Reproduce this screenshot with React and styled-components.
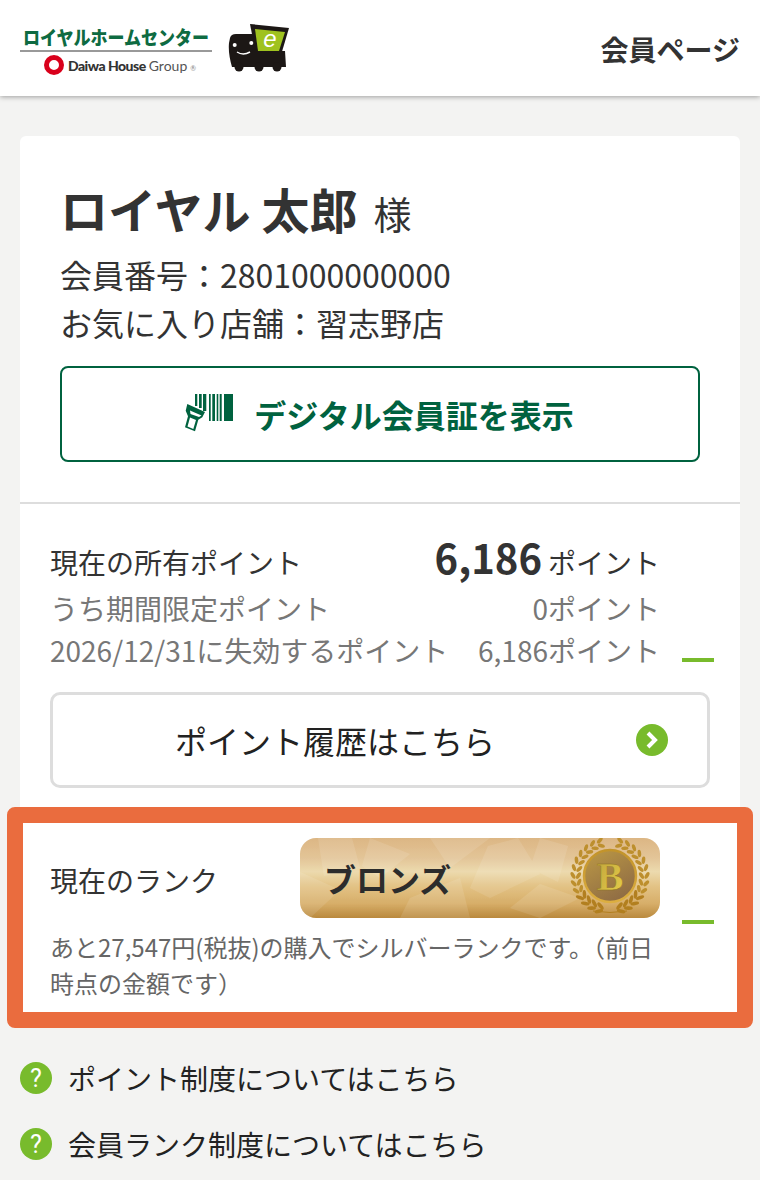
import React from "react";
import styled, { createGlobalStyle } from "styled-components";

const Global = createGlobalStyle`
  html, body { margin: 0; padding: 0; background: #f3f3f2; }
  body { font-family: "Noto Sans CJK JP", "Noto Sans", sans-serif; color: #333; }
  * { box-sizing: border-box; }
`;
const Page = styled.div`width: 760px; height: 1180px; overflow: hidden; background: #f3f3f2;`;
const Header = styled.header`
  height: 96px; background: #fff; box-shadow: 0 1px 5px rgba(0,0,0,.35);
  display: flex; align-items: center; justify-content: space-between; padding: 0 20px;
`;
const Brand = styled.div`display: flex; align-items: center; gap: 16px;`;
const Logo = styled.div`width: 192px; margin-top: 4px; display: flex; flex-direction: column; align-items: center;`;
const LogoName = styled.div`
  width: 100%; height: 29px; border-bottom: 2px solid #999; color: #0e6b42; text-align: center; white-space: nowrap;
  font-size: 17px; line-height: 27px; font-weight: 900; letter-spacing: 0;
`;
const LogoNameText = styled.span`display: inline-block; transform: scaleY(1.15);`;
const LogoGroup = styled.div`display: flex; align-items: center; gap: 4px; height: 24px; margin-top: 1px; padding-left: 8px; color: #333; font-family: Lato, sans-serif; font-size: 14px; white-space: nowrap;`;
const Ring = styled.span`width: 20px; height: 20px; border-radius: 50%; border: 5px solid #d9001b; background: #fff;`;
const LogoBold = styled.b`font-weight: 900; letter-spacing: -.5px;`;
const LogoThin = styled.span`color: #555; margin-left: -1px;`;
const LogoMark = styled.span`font-size: 7px; color: #888; margin: 5px 0 0 -1px;`;
const HeaderTitle = styled.div`font-size: 28px; line-height: 40px; font-weight: 700; color: #333; margin-top: 2px;`;

const Card = styled.section`margin: 40px 20px 0; background: #fff; border-radius: 6px 6px 0 0;`;
const Member = styled.div`padding: 36px 40px 40px; border-bottom: 2px solid #ddd;`;
const Name = styled.div`margin-bottom: 1px; font-size: 48px; line-height: 72px; font-weight: 700; color: #333; white-space: nowrap; display: flex; align-items: baseline;`;
const Honorific = styled.span`font-size: 38px; font-weight: 400; margin-left: 16px;`;
const MemberLine = styled.div`font-size: 32px; line-height: 48px; color: #333; white-space: nowrap;`;
const DigitalButton = styled.div`
  margin-top: 20px; height: 96px; border: 2px solid #00623f; border-radius: 8px;
  display: flex; align-items: center; justify-content: center; gap: 19px; color: #00623f;
  font-size: 32px; font-weight: 700; padding-right: 1px;
`;
const Points = styled.div`padding: 32px 26px 0 30px;`;
const PointGrid = styled.div`display: grid; grid-template-columns: 610px 32px; column-gap: 22px;`;
const Rows = styled.div`display: flex; flex-direction: column;`;
const Row = styled.div`
  display: flex; justify-content: space-between; align-items: baseline; white-space: nowrap;
  font-size: 28px; line-height: ${p => (p.$main ? "50px" : "42px")}; color: ${p => (p.$main ? "#333" : "#777")};
`;
const Amount = styled.b`font-size: 40px; line-height: 42px; font-weight: 700; color: #333; margin-right: 6px;`;
const Dash = styled.span`display: block; width: 32px; height: 4px; background: #78bb2c;`;
const GridDash = styled(Dash)`align-self: end; margin-bottom: 9px;`;
const HistoryButton = styled.div`
  margin: 21px 4px 0 0; height: 96px; border: 3px solid #ddd; border-radius: 10px;
  display: flex; align-items: center; justify-content: space-between; padding: 0 39px 0 122px;
  font-size: 32px; color: #222; white-space: nowrap;
`;
const RoundIcon = styled.span`
  width: 32px; height: 32px; border-radius: 50%; background: #78bb2c; color: #fff; flex: none;
  display: flex; align-items: center; justify-content: center; font-size: 25px; line-height: 1; font-family: Roboto, sans-serif; font-weight: 400;
`;
const Highlight = styled.div`
  margin: 19px -13px 0; border: 16px solid #ea6c3e; border-radius: 8px; background: #fff; padding: 15px 0 11px 27px;
`;
const RankRow = styled.div`display: flex; align-items: center;`;
const RankLabel = styled.div`width: 250px; padding-top: 4px; font-size: 28px; line-height: 40px; color: #333;`;
const Badge = styled.div`
  position: relative; width: 360px; height: 80px; border-radius: 16px; overflow: hidden; padding-left: 24px;
  display: flex; align-items: center; font-size: 32px; font-weight: 700; color: #2c2c2c;
  background: linear-gradient(180deg, #dcb684 0%, #e3c598 25%, #ecdaae 42%, #e3c386 60%, #d7ae69 82%, #ba8a3e 100%);
`;
const BadgeArt = styled.svg`position: absolute; inset: 0;`;
const BadgeText = styled.span`position: relative;`;
const RankDash = styled(Dash)`align-self: flex-end; margin: 0 0 -6px 22px;`;
const Note = styled.p`margin: 11px 60px 0 0; font-size: 24px; line-height: 36px; color: #666;`;
const Links = styled.nav`padding: 0 20px; margin-top: 26px; display: flex; flex-direction: column; gap: 18px;`;
const LinkRow = styled.div`display: flex; align-items: center; gap: 16px; font-size: 28px; line-height: 48px; color: #222; white-space: nowrap;`;

const Truck = () => (
  <svg width="66" height="50" viewBox="0 0 66 50" style={{ display: "block" }}>
    <path d="M22 1 L61 5 L53 32 L28 32Z" fill="#1c1715" />
    <path d="M27 6 L57 9 L51 28 L30 28Z" fill="#9fc21f" />
    <text x="42" y="24" textAnchor="middle" fontSize="24" fontStyle="italic" fontFamily="Liberation Sans, sans-serif" fill="#fff">e</text>
    <path d="M2 15 Q3 11 8 11 L24 11 Q27 11 27 14 L28 28 L57 28 L58 44 L4 44 Q0 30 1 20Z" fill="#1c1715" />
    <circle cx="11" cy="44" r="4.5" fill="#1c1715" /><circle cx="31" cy="44" r="4.5" fill="#1c1715" /><circle cx="49" cy="44" r="4.5" fill="#1c1715" />
    <circle cx="6.7" cy="22" r="2" fill="#fff" /><circle cx="23.3" cy="20" r="2" fill="#fff" />
    <path d="M9 29 Q15 33 22 29" stroke="#fff" strokeWidth="1.5" fill="none" />
  </svg>
);

const ScannerIcon = () => (
  <svg width="50" height="40" viewBox="0 0 50 40" fill="#00623f" style={{ display: "block" }}>
    <path d="M10 0h2.3v12H10zM14 0h2.7v14H14zM18 0h3.3v17H18zM24 0h1.7v27H24zM27.3 0H30v27h-2.7zM31.7 0h1.6v27h-1.6zM34.7 0h2v27h-2zM39 0h9v27h-9z" />
    <path d="M2.3 10 L20 18 L17.3 23.3 L13.3 25.7 L10 37.3 L0 33.3 L3 22.3 L.7 16.7Z" />
    <path d="M5 16.5 L16.5 21.5 L14 23 L5.5 20Z" fill="#fff" />
    <path d="M5 23.5 L11 26 L8.3 35 L2.5 32.5Z" fill="#fff" />
  </svg>
);

const Medal = () => {
  const cx = 310, cy = 38;
  const leaves = [];
  for (let i = 0; i < 13; i++) {
    const deg = -74 + i * 12.2;
    const a = deg * Math.PI / 180;
    [1, -1].forEach(s => {
      [[31.5, -1], [37, 1]].forEach(([r, o]) => {
        const x = cx + s * r * Math.cos(a), y = cy + r * Math.sin(a);
        const rot = (deg + o * 32) * s;
        const fill = i > 8 ? "#b27f1f" : "#bd8f2d";
        leaves.push(<ellipse key={`${i}${s}${r}`} cx={x} cy={y} rx="1.8" ry={i > 8 ? "4.4" : "3.7"} fill={fill} transform={`rotate(${rot} ${x} ${y})`} />);
      });
    });
  }
  return (
    <>
      <defs>
        <linearGradient id="coin" x1=".2" y1="0" x2=".8" y2="1"><stop offset="0" stopColor="#b99645" /><stop offset="1" stopColor="#8c6944" /></linearGradient>
        <linearGradient id="rim" x1="0" y1="0" x2="0" y2="1"><stop offset="0" stopColor="#c2932a" /><stop offset="1" stopColor="#dcae40" /></linearGradient>
        <linearGradient id="letter" x1="0" y1="0" x2="1" y2="1"><stop offset="0" stopColor="#c0a23a" /><stop offset="1" stopColor="#e6d04c" /></linearGradient>
      </defs>
      {leaves}
      <path d={`M${cx - 17} 73 Q${cx} 76 ${cx + 17} 73`} stroke="#b27f1f" strokeWidth="1" fill="none" />
      <circle cx={cx} cy={cy} r="26" fill="url(#coin)" stroke="url(#rim)" strokeWidth="2.5" />
      <text x={cx} y={cy + 14} textAnchor="middle" fontSize="40" fontFamily="Liberation Serif, serif" fill="url(#letter)" stroke="#8d7322" strokeWidth=".4">B</text>
    </>
  );
};

const Facets = () => (
  <g fill="#fff" opacity=".1">
    <path d="M18 0 L52 0 L60 30 L24 38Z" />
    <path d="M70 0 L110 16 L80 40 L62 28Z" />
    <path d="M130 0 L190 0 L150 30Z" />
    <path d="M188 8 L218 0 L240 36 L190 60 L170 50Z" />
    <path d="M240 0 L268 8 L258 44 L230 30Z" />
    <path d="M0 34 L40 52 L10 80 L0 80Z" />
    <path d="M110 60 L160 40 L170 80 L100 80Z" />
    <path d="M240 46 L280 60 L240 80 L210 70Z" />
  </g>
);

export default function App() {
  return (
    <Page>
      <Global />
      <Header>
        <Brand>
          <Logo>
            <LogoName><LogoNameText>ロイヤルホームセンター</LogoNameText></LogoName>
            <LogoGroup><Ring /><LogoBold>Daiwa House</LogoBold><LogoThin>Group</LogoThin><LogoMark>®</LogoMark></LogoGroup>
          </Logo>
          <Truck />
        </Brand>
        <HeaderTitle>会員ページ</HeaderTitle>
      </Header>
      <Card>
        <Member>
          <Name>ロイヤル 太郎<Honorific>様</Honorific></Name>
          <MemberLine>会員番号：2801000000000</MemberLine>
          <MemberLine>お気に入り店舗：習志野店</MemberLine>
          <DigitalButton><ScannerIcon />デジタル会員証を表示</DigitalButton>
        </Member>
        <Points>
          <PointGrid>
            <Rows>
              <Row $main><span>現在の所有ポイント</span><span><Amount>6,186</Amount>ポイント</span></Row>
              <Row><span>うち期間限定ポイント</span><span>0ポイント</span></Row>
              <Row><span>2026/12/31に失効するポイント</span><span>6,186ポイント</span></Row>
            </Rows>
            <GridDash />
          </PointGrid>
          <HistoryButton>
            ポイント履歴はこちら
            <RoundIcon>
              <svg width="16" height="18" viewBox="0 0 16 18"><path d="M4 2 L11 9 L4 16" fill="none" stroke="#fff" strokeWidth="4" /></svg>
            </RoundIcon>
          </HistoryButton>
        </Points>
        <Highlight>
          <RankRow>
            <RankLabel>現在のランク</RankLabel>
            <Badge>
              <BadgeArt width="360" height="80" viewBox="0 0 360 80"><Facets /><Medal /></BadgeArt>
              <BadgeText>ブロンズ</BadgeText>
            </Badge>
            <RankDash />
          </RankRow>
          <Note>あと27,547円(税抜)の購入でシルバーランクです。（前日時点の金額です）</Note>
        </Highlight>
      </Card>
      <Links>
        <LinkRow><RoundIcon>?</RoundIcon>ポイント制度についてはこちら</LinkRow>
        <LinkRow><RoundIcon>?</RoundIcon>会員ランク制度についてはこちら</LinkRow>
      </Links>
    </Page>
  );
}
